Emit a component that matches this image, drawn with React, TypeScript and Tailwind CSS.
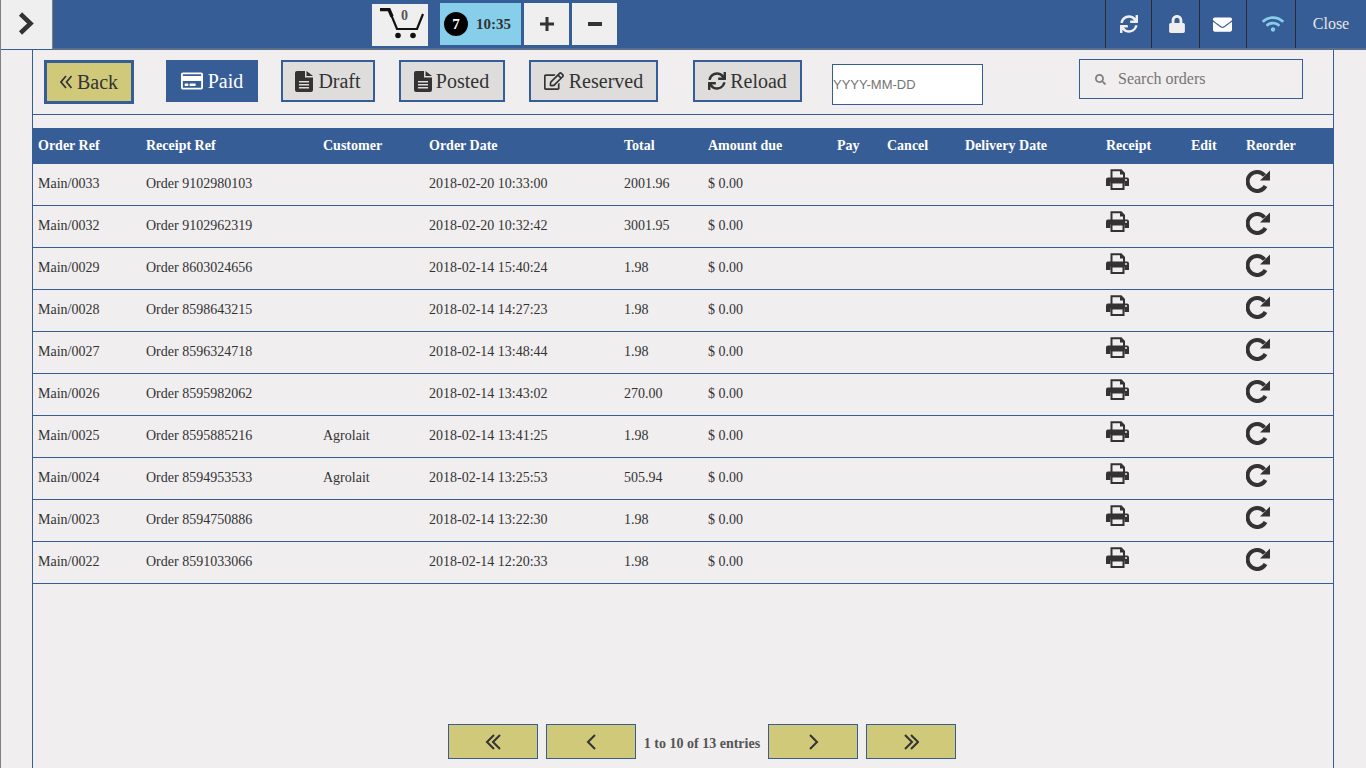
import {
  FaEnvelope,
  FaLock,
  FaRegCreditCard,
  FaRegEdit,
  FaSearch,
  FaSync,
  FaWifi,
} from "react-icons/fa";

const orders = [
  ["Main/0033", "Order 9102980103", "", "2018-02-20 10:33:00", "2001.96"],
  ["Main/0032", "Order 9102962319", "", "2018-02-20 10:32:42", "3001.95"],
  ["Main/0029", "Order 8603024656", "", "2018-02-14 15:40:24", "1.98"],
  ["Main/0028", "Order 8598643215", "", "2018-02-14 14:27:23", "1.98"],
  ["Main/0027", "Order 8596324718", "", "2018-02-14 13:48:44", "1.98"],
  ["Main/0026", "Order 8595982062", "", "2018-02-14 13:43:02", "270.00"],
  ["Main/0025", "Order 8595885216", "Agrolait", "2018-02-14 13:41:25", "1.98"],
  ["Main/0024", "Order 8594953533", "Agrolait", "2018-02-14 13:25:53", "505.94"],
  ["Main/0023", "Order 8594750886", "", "2018-02-14 13:22:30", "1.98"],
  ["Main/0022", "Order 8591033066", "", "2018-02-14 12:20:33", "1.98"],
];

const columns = [
  ["Order Ref", "w-[108px]"],
  ["Receipt Ref", "w-[177px]"],
  ["Customer", "w-[106px]"],
  ["Order Date", "w-[195px]"],
  ["Total", "w-[84px]"],
  ["Amount due", "w-[129px]"],
  ["Pay", "w-[50px]"],
  ["Cancel", "w-[78px]"],
  ["Delivery Date", "w-[141px]"],
  ["Receipt", "w-[85px]"],
  ["Edit", "w-[55px]"],
  ["Reorder", "w-[92px]"],
];

function Chevron({ dir, double }: { dir: "left" | "right"; double?: boolean }) {
  const points = dir === "left" ? "9,1 2,8 9,15" : "2,1 9,8 2,15";
  return (
    <svg width={double ? 16 : 11} height="16" viewBox={double ? "0 0 16 16" : "0 0 11 16"} fill="none" stroke="#333" strokeWidth="2">
      <polyline points={points} />
      {double && <polyline points={dir === "left" ? "15,1 8,8 15,15" : "8,1 15,8 8,15"} />}
    </svg>
  );
}

function Cart() {
  return (
    <svg width="50" height="32" viewBox="0 0 50 32" fill="none">
      <path d="M5 1.500h9l8 19.500h20l6-15" stroke="#111" strokeWidth="2.2" />
      <path d="M5 1.500h9l3 7" stroke="#111" strokeWidth="3.400" />
      <circle cx="23" cy="27.500" r="2.800" fill="#111" />
      <circle cx="38" cy="27.500" r="2.800" fill="#111" />
    </svg>
  );
}

function FileIcon() {
  return (
    <svg width="18" height="21" viewBox="0 0 18 21" fill="#333">
      <path
        fillRule="evenodd"
        d="M0 2a2 2 0 0 1 2-2h8v6.500h8V19a2 2 0 0 1-2 2H2a2 2 0 0 1-2-2zM4 10v1.500h10V10zM4 13v1.500h10V13zM4 16v1.500h10V16z"
      />
      <path d="M11.500 0L18 5h-6.500z" />
    </svg>
  );
}

function PrintIcon() {
  return (
    <svg className="mt-[5px] block" width="23" height="21" viewBox="0 0 23 21" fill="none">
      <path d="M5.500 9V1.200h9.500l3 3.300V9" stroke="#333" strokeWidth="2" />
      <path d="M14 1v4.500h4.500z" fill="#333" />
      <path d="M2 8.500h19a2 2 0 0 1 2 2V17h-4.500v-3.500h-14V17H0v-6.500a2 2 0 0 1 2-2z" fill="#333" />
      <circle cx="20" cy="11" r="1" fill="#f0eeef" />
      <rect x="5.500" y="13.500" width="12" height="6.500" fill="#f0eeef" stroke="#333" strokeWidth="2" />
    </svg>
  );
}

function RepeatIcon() {
  return (
    <svg className="mt-[5px] block" width="24" height="24" viewBox="0 0 24 24" fill="none">
      <path d="M18.500 6.500A9.500 9.500 0 1 0 19.500 17" stroke="#333" strokeWidth="4" />
      <path d="M24 1.500v10h-10z" fill="#333" />
    </svg>
  );
}

const cell = "border-b border-[#375d96] pb-[2px] pl-[5px]";

export default function App() {
  return (
    <div className="h-screen overflow-hidden border-l border-[#808080] bg-[#f0eeef] font-['Liberation_Serif',serif] text-[#333]">
      {/* top bar */}
      <div className="flex h-[50px]">
        <div className="flex w-[52px] items-center justify-center border-r border-b border-r-[#808080] border-b-[#375d96] bg-[#efefef] pb-[2px] pr-[2px]">
          <svg width="16" height="23" viewBox="0 0 16 23" fill="none" stroke="#333" strokeWidth="4.500">
            <polyline points="2.500,2 12.500,11.500 2.500,21" />
          </svg>
        </div>
        <div className="flex flex-1 border-b-2 border-[#5a6f8c] bg-[#375d96]">
          <div className="ml-[319px] flex items-start">
            <div className="relative mt-1 flex h-[42px] w-[56px] items-start justify-center bg-[#efefef] pt-[4px]">
              <Cart />
              <span className="absolute left-[29px] top-[3px] text-[14px] font-bold leading-[18px] text-[#555]">0</span>
            </div>
            <div className="ml-3 mt-[3px] flex h-[42px] w-[81px] items-center bg-[#87ceeb] pl-1 text-[15px] font-bold">
              <span className="flex h-6 w-6 items-center justify-center rounded-full bg-black text-white">7</span>
              <span className="ml-2">10:35</span>
            </div>
            <div className="ml-[3px] mt-[3px] flex h-[42px] w-[45px] items-center justify-center bg-[#efefef]">
              <svg width="14" height="14" viewBox="0 0 14 14" fill="#333">
                <path d="M5.500 0h3v5.500H14v3H8.500V14h-3V8.500H0v-3h5.500z" />
              </svg>
            </div>
            <div className="ml-[3px] mt-[3px] flex h-[42px] w-[45px] items-center justify-center bg-[#efefef]">
              <svg width="14" height="4" viewBox="0 0 14 4" fill="#333">
                <rect width="14" height="4" />
              </svg>
            </div>
          </div>
          <div className="ml-auto flex text-[#efefef]">
            <div className="flex w-[46px] items-center justify-center border-l border-[#2b2b2b] text-[18px]">
              <FaSync />
            </div>
            <div className="flex w-[48px] items-center justify-center border-l border-[#2b2b2b] pl-[3px] text-[18px]">
              <FaLock />
            </div>
            <div className="flex w-[47px] items-center justify-center border-l border-[#2b2b2b] pr-[2px] text-[19px] text-white">
              <FaEnvelope />
            </div>
            <div className="flex w-[49px] items-center justify-center border-l border-[#2b2b2b] pl-[4px] text-[22px] text-[#87ceeb]">
              <FaWifi />
            </div>
            <div className="flex w-[71px] items-center justify-center border-l border-[#2b2b2b] text-[16px] text-[#e6e6e6]">
              Close
            </div>
          </div>
        </div>
      </div>

      {/* main panel */}
      <div className="ml-[31px] flex h-[718px] w-[1302px] flex-col border-x border-[#375d96]">
        <div className="flex h-[65px] items-start border-b border-[#375d96] pl-[11px] text-[20px]">
          <button className="mt-[10px] flex h-[44px] w-[90px] items-center justify-center gap-[5px] border-[3px] border-[#375d96] bg-[#d0c97a]">
            <svg width="12" height="14" viewBox="0 0 12 14" fill="none" stroke="#333" strokeWidth="1.700">
              <polyline points="6,1 1,7 6,13" />
              <polyline points="11.500,1 6.500,7 11.500,13" />
            </svg>
            Back
          </button>
          <button className="ml-[32px] mt-[10px] flex h-[42px] w-[92px] items-center justify-center gap-[5px] bg-[#375d96] text-white">
            <FaRegCreditCard className="text-[22px]" />
            Paid
          </button>
          <button className="ml-[23px] mt-[10px] flex h-[42px] w-[94px] items-center justify-center gap-[5px] border-2 border-[#375d96] bg-[#dfdddc]">
            <FileIcon />
            Draft
          </button>
          <button className="ml-[24px] mt-[10px] flex h-[42px] w-[106px] items-center justify-center gap-[4px] border-2 border-[#375d96] bg-[#dfdddc] pr-[1px]">
            <FileIcon />
            Posted
          </button>
          <button className="ml-[24px] mt-[10px] flex h-[42px] w-[129px] items-center justify-center gap-[5px] border-2 border-[#375d96] bg-[#dfdddc]">
            <FaRegEdit className="text-[20px]" />
            Reserved
          </button>
          <button className="ml-[35px] mt-[10px] flex h-[42px] w-[109px] items-center justify-center gap-[4px] border-2 border-[#375d96] bg-[#dfdddc]">
            <FaSync className="text-[18px]" />
            Reload
          </button>
          <input
            placeholder="YYYY-MM-DD"
            className="ml-[30px] mt-[14px] h-[41px] w-[151px] border border-[#375d96] bg-white font-['Liberation_Sans',sans-serif] text-[13px] placeholder:text-[#757575]"
          />
          <div className="ml-[96px] mt-[9px] flex h-[40px] w-[224px] items-center border border-[#375d96] pl-[15px]">
            <FaSearch className="text-[11px] text-[#808080]" />
            <input
              placeholder="Search orders"
              className="ml-3 w-[170px] bg-transparent text-[16px] placeholder:text-[#757575]"
            />
          </div>
        </div>

        <table className="mt-[13px] w-full table-fixed border-separate border-spacing-0 text-[14px]">
          <thead>
            <tr className="h-[36px] bg-[#375d96] text-left text-white">
              {columns.map(([name, width]) => (
                <th key={name} className={`${width} p-0 pb-[2px] pl-[5px] font-bold`}>
                  {name}
                </th>
              ))}
            </tr>
          </thead>
          <tbody>
            {orders.map((o) => (
              <tr key={o[0]} className="h-[42px]">
                <td className={cell}>{o[0]}</td>
                <td className={cell}>{o[1]}</td>
                <td className={cell}>{o[2]}</td>
                <td className={cell}>{o[3]}</td>
                <td className={cell}>{o[4]}</td>
                <td className={cell}>$ 0.00</td>
                <td className={cell} />
                <td className={cell} />
                <td className={cell} />
                <td className={`${cell} align-top`}>
                  <PrintIcon />
                </td>
                <td className={cell} />
                <td className={`${cell} align-top`}>
                  <RepeatIcon />
                </td>
              </tr>
            ))}
          </tbody>
        </table>

        <div className="mt-auto mb-[9px] flex items-center justify-center pl-[38px]">
          <button className="flex h-[35px] w-[90px] items-center justify-center border border-[#375d96] bg-[#d0c97a]">
            <Chevron dir="left" double />
          </button>
          <button className="ml-2 flex h-[35px] w-[90px] items-center justify-center border border-[#375d96] bg-[#d0c97a]">
            <Chevron dir="left" />
          </button>
          <span className="mt-1 w-[132px] text-center text-[14px] font-bold text-[#555]">1 to 10 of 13 entries</span>
          <button className="flex h-[35px] w-[90px] items-center justify-center border border-[#375d96] bg-[#d0c97a]">
            <Chevron dir="right" />
          </button>
          <button className="ml-2 flex h-[35px] w-[90px] items-center justify-center border border-[#375d96] bg-[#d0c97a]">
            <Chevron dir="right" double />
          </button>
        </div>
      </div>
    </div>
  );
}
